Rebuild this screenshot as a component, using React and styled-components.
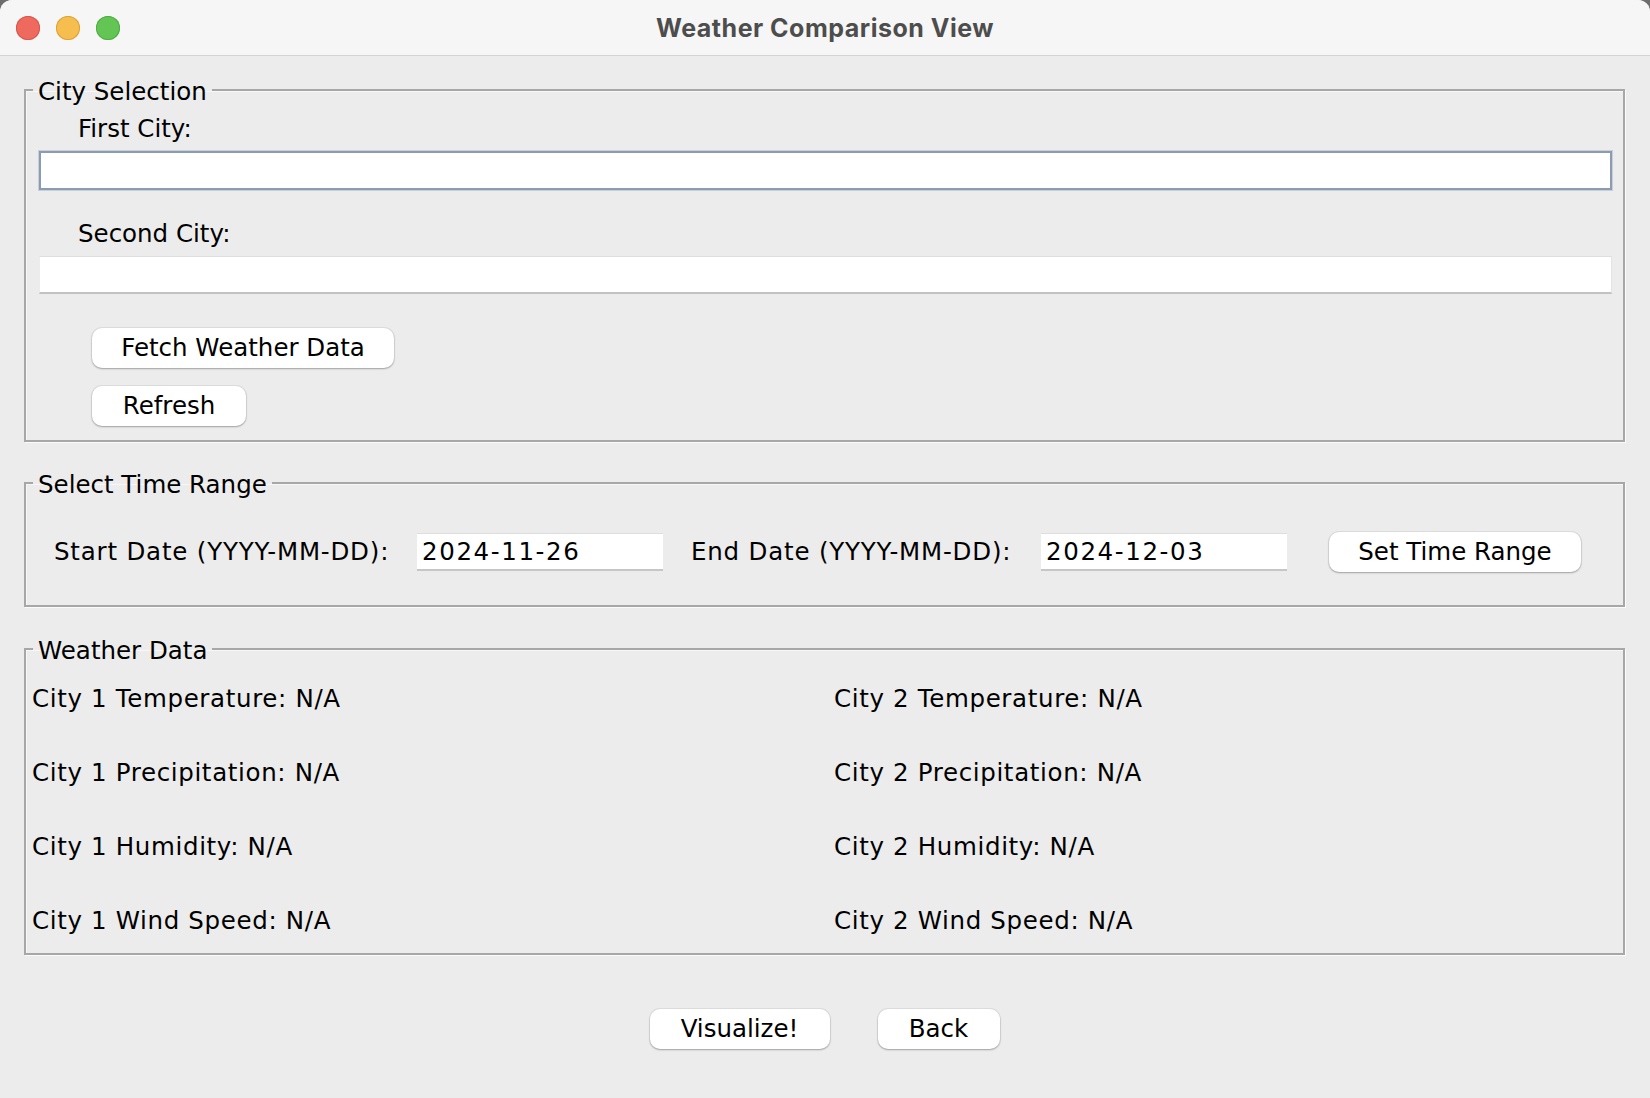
import React from "react";
import styled, { createGlobalStyle } from "styled-components";

const GlobalStyle = createGlobalStyle`
  html, body { margin: 0; padding: 0; background: #6e6e6e; }
  body { font-family: "DejaVu Sans", "Liberation Sans", sans-serif; }
  * { box-sizing: border-box; }
`;

const Window = styled.div`
  width: 1650px;
  height: 1098px;
  background: #ececec;
  border-radius: 12px 12px 0 0;
  overflow: hidden;
  display: flex;
  flex-direction: column;
`;

const TitleBar = styled.div`
  height: 56px;
  flex: none;
  background: #f6f6f6;
  border-bottom: 1px solid #d3d3d3;
  display: flex;
  align-items: center;
  position: relative;
  padding-left: 16px;
`;

const Lights = styled.div`
  display: flex;
  gap: 16px;
`;

const Light = styled.span`
  width: 24px;
  height: 24px;
  border-radius: 50%;
  background: ${(p) => p.$c};
  box-shadow: inset 0 0 0 1px ${(p) => p.$b};
`;

const Title = styled.div`
  position: absolute;
  inset: 0;
  display: flex;
  align-items: center;
  justify-content: center;
  font-family: Inter, "Liberation Sans", sans-serif;
  font-weight: 700;
  font-size: 25px;
  letter-spacing: 0.5px;
  color: #4d4d4d;
  pointer-events: none;
`;

const Content = styled.div`
  flex: 1;
  display: flex;
  flex-direction: column;
  padding: 17px 25px 0 24px;
  font-family: "DejaVu Sans", "Liberation Sans", sans-serif;
  font-size: 24.5px;
  color: #000;
`;

const Group = styled.fieldset`
  margin: ${(p) => p.$mt || 0}px 0 0 0;
  padding: ${(p) => p.$pt}px 0 ${(p) => p.$pb}px 0;
  border: 2px solid #a7a7a7;
  box-shadow: 1px 1px 0 #fbfbfb, inset 1px 1px 0 #f7f7f7;
  min-width: 0;
`;

const Legend = styled.legend`
  margin-left: 7px;
  padding: 5px 5px 0 5px;
  line-height: 28px;
  font-size: 24.5px;
`;

const CityColumn = styled.div`
  display: flex;
  flex-direction: column;
  padding: 0 11px 0 13px;
`;

const FieldLabel = styled.div`
  line-height: 30px;
  margin: ${(p) => p.$mt || 0}px 0 0 39px;
`;

const TextField = styled.div`
  margin-top: 7px;
  background: #fff;
  ${(p) =>
    p.$focused
      ? `height: 39px; border: 2px solid #8c9bb0; box-shadow: 0 0 0 1px #c6d0dc;`
      : `height: 38px; border-top: 1px solid #dedede; border-left: 1px solid #ececec; border-right: 1px solid #e4e4e4; border-bottom: 2px solid #c2c2c2;`}
`;

const Button = styled.button`
  height: 40px;
  width: ${(p) => p.$w}px;
  margin: ${(p) => p.$m || "0"};
  padding: 0;
  background: #fff;
  border: none;
  border-radius: 10px;
  box-shadow: 0 1px 2px rgba(0, 0, 0, 0.28), 0 0 0 1px rgba(0, 0, 0, 0.06);
  font-family: "DejaVu Sans", "Liberation Sans", sans-serif;
  font-size: 24.5px;
  color: #000;
  line-height: 38px;
  flex: none;
`;

const ButtonStack = styled.div`
  display: flex;
  flex-direction: column;
  align-items: flex-start;
  padding-left: 53px;
  margin-top: 34px;
  gap: 18px;
`;

const RangeRow = styled.div`
  display: flex;
  align-items: center;
  height: 40px;
  padding-left: 28px;
`;

const RangeLabel = styled.div`
  width: ${(p) => p.$w}px;
  padding-left: ${(p) => p.$pl}px;
  line-height: 30px;
  letter-spacing: 0.8px;
  white-space: nowrap;
  flex: none;
`;

const DateField = styled.div`
  width: 246px;
  height: 38px;
  flex: none;
  background: #fff;
  border-top: 1px solid #dedede;
  border-bottom: 2px solid #c6c6c6;
  padding-left: 5px;
  line-height: 36px;
  letter-spacing: 1.6px;
`;

const DataGrid = styled.div`
  display: grid;
  grid-template-columns: 802px 1fr;
  row-gap: 44px;
  padding-left: 6px;
`;

const DataItem = styled.div`
  line-height: 30px;
  letter-spacing: 0.65px;
  white-space: nowrap;
`;

const Footer = styled.div`
  display: flex;
  justify-content: center;
  gap: 48px;
  margin-top: 54px;
`;

const metrics = ["Temperature", "Precipitation", "Humidity", "Wind Speed"];

export default function App() {
  return (
    <>
      <GlobalStyle />
      <Window>
        <TitleBar>
          <Lights>
            <Light $c="#ee6a5f" $b="#d9564b" />
            <Light $c="#f5be4f" $b="#dca23a" />
            <Light $c="#62c554" $b="#50ad43" />
          </Lights>
          <Title>Weather Comparison View</Title>
        </TitleBar>
        <Content>
          <Group $pt={8} $pb={14}>
            <Legend>City Selection</Legend>
            <CityColumn>
              <FieldLabel>First City:</FieldLabel>
              <TextField $focused />
              <FieldLabel $mt={29}>Second City:</FieldLabel>
              <TextField />
              <ButtonStack>
                <Button $w={302}>Fetch Weather Data</Button>
                <Button $w={154}>Refresh</Button>
              </ButtonStack>
            </CityColumn>
          </Group>

          <Group $mt={24} $pt={33} $pb={33}>
            <Legend>Select Time Range</Legend>
            <RangeRow>
              <RangeLabel $w={363} $pl={0}>Start Date (YYYY-MM-DD):</RangeLabel>
              <DateField>2024-11-26</DateField>
              <RangeLabel $w={378} $pl={28}>End Date (YYYY-MM-DD):</RangeLabel>
              <DateField>2024-12-03</DateField>
              <Button $w={252} $m="0 0 0 42px">Set Time Range</Button>
            </RangeRow>
          </Group>

          <Group $mt={25} $pt={19} $pb={17}>
            <Legend>Weather Data</Legend>
            <DataGrid>
              {metrics.map((m) => (
                <React.Fragment key={m}>
                  <DataItem>City 1 {m}: N/A</DataItem>
                  <DataItem>City 2 {m}: N/A</DataItem>
                </React.Fragment>
              ))}
            </DataGrid>
          </Group>

          <Footer>
            <Button $w={180}>Visualize!</Button>
            <Button $w={122}>Back</Button>
          </Footer>
        </Content>
      </Window>
    </>
  );
}
